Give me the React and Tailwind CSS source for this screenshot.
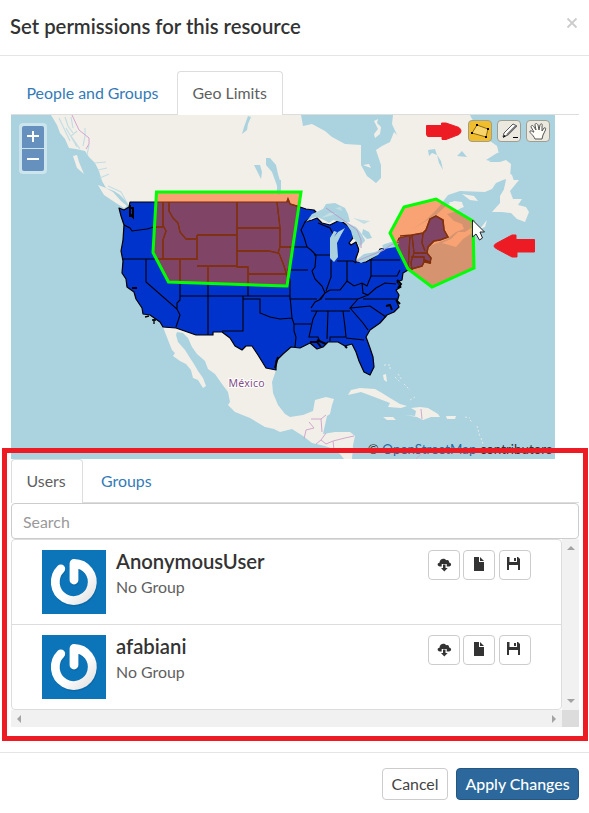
import React from "react";

const LAND = "M51 115L57 125 60 133 65 139 69 148 76 149 85 151 89 157 95 163 99 171 102 181 106 188 114 191 120 195 127 202 130 208 150 225 160 260 180 310 163 327 168 340 172 350 175 353 173 356 180 361 186 364 191 370 193 378 198 380 203 388 206 386 203 378 198 371 194 364 190 358 185 350 178 342 176 335 177 332 183 333 188 338 192 347 197 354 205 361 208 369 215 374 222 384 228 392 230 402 228 405 235 412 250 418 265 427 274 429 280 432 292 429 303 436 312 443 325 446 334 449 340 454 344 459H352L353 445 355 436 350 432 335 432 323 434 325 425 327 416 330 414 332 405 334 399 326 397 315 400 313 411 303 415 290 417 285 414 278 405 273 393 272 382 276 370 250 335 298 285 372 290 385 262 382 250 391 242 399 241 420 250 447 239 456 232 464 229 462 224 454 221 447 214 454 212 463 207 462 202 454 201 447 205 435 216 421 224 411 230 425 221 438 208 448 195 460 191 485 192 492 189 496 183 503 180 510 178 511 164 506 160 500 162 489 162 499 154 497 146 490 141 483 133 476 124 472 119 470 115Z";
const STATES = "M119 208L124 210 129 207 130 202H287L288 199 290 204 300 207 306 209 314 210 316 212 310 218 305 222 312 220 317 218 322 223 330 225 340 220 348 226 353 233 353 238 349 243 351 245 356 242 359 250 356 258 356 262 366 262 377 255 380 249 390 247 397 243 399 238 412 235 423 233 426 230 430 219 436 216 443 220 444 230 448 237 440 240 434 241 428 247 427 253 431 258 430 263 424 262 422 266 408 270 403 273 402 280 397 282 401 287 396 290 399 295 397 302 399 307 394 312 387 315 380 323 370 330 366 337 370 348 373 357 374 367 370 375 364 372 359 361 356 352 352 344 345 346 338 342 328 342 323 347 317 349 310 343 300 348 291 347 283 354 276 361 276 370 266 368 258 355 252 346 246 346 242 350 235 346 230 338 222 332H213V335H196L176 328 163 327 160 322 150 315 143 314 142 308 136 299 134 292 127 287 126 279 122 273 123 261 121 251 123 240 124 225 121 216Z";
const LINES = "M124 225L130 228 132 231 147 229 154 227 164 227 166 231 163 240 163 259M163 202V226M169 202V211L173 218 178 223 180 232 186 239 197 239V260M122 259H197M146 259V282L177 309 180 315 176 327M180 259V300L177 303V309M197 235H237V266H197M197 239V235M237 202V267H248V296M208 267V335M180 296H290M237 228H280L277 202M280 228V247L278 253 269 251H237M280 247H307M279 253L284 266 287 276M248 274H287L290 280V300M287 270H308M243 296V331H222M243 299H260V313L270 317 280 319 292 318M290 296L292 318M291 299H317M292 318L294 324V331L296 337 295 347M294 324H311M311 308L315 302 321 299 325 293 322 286 315 279 312 271 315 267 316 255 311 250 307 247 304 237 301 230 305 222M318 223L330 228 333 234M314 255H331M331 260V277L326 291M337 261H353M347 261V281L340 290 330 290 325 293 319 300M353 261L356 263M371 259V276H397M371 276L367 286 362 283 354 286 347 281M362 283L363 293 368 295 376 288 385 283 396 284M368 295L358 299H325M358 299L350 308 370 306 386 317M363 299H397M311 311H350M350 308L363 323 368 330M328 311L327 339M343 311L345 327 346 337H330V341M346 338L364 340M317 311L313 319 309 337H318L320 342M371 276H397L400 270M374 260H400M408 270L410 235M412 235L414 253 411 262 412 270M423 233L422 243 425 251M414 253H428M411 257H424V263M369 260L374 260";

function GeoMap() {
  return (
    <svg viewBox="11 115 544 344" className="block h-full w-full">
      <defs>
        <clipPath id="drawn"><path d="M156.5 192H301L287 286 168.500 282 153 252.500ZM404 207L436 199 473 221 474 268 432 287 408 269 390 233Z" /></clipPath>
      </defs>
      <rect x="11" y="115" width="544" height="344" fill="#aad3df" />
      <path d={LAND} fill="#f2efe9" />
      <path d="M98 185L106 188 113 192 121 201 127 206 124 208 116 203 104 195ZM73 156L77 155 79 162 84 174 77 168ZM442 243L451 239 458 232 465 232 474 226 479 230 487 220 485 227 475 231 463 239 456 247ZM462 194L474 196 478 201 470 200ZM449 202L461 202 464 207 456 209ZM511 180H519L510 191 513 199 522 199 518 205 526 207 529 212 525 222 517 219 511 213 502 212 492 212 500 203 500 196 506 186ZM507 172L512 175 514 181 509 190 503 193 506 180Z" fill="#f2efe9" />
      <path d="M348 395L351 390 360 388 375 389 382 393 390 398 400 404 407 406 401 408 388 407 390 403 377 398 369 395 361 392ZM383 417L393 417 396 420 387 420ZM405 415L415 416 416 411 411 408 420 407 428 408 438 414 440 417 431 417 423 420 417 417ZM446 416L456 416 455 419 447 419ZM383 375L386 374 387 382 384 380Z" fill="#f2efe9" />
      <path d="M384 365H390L390 370M395 377L400 382M404 384L410 390M410 400L415 397M470 420L472 422M477 426L480 437M398 374L402 380M481 438L483 444M465 417L470 418" fill="none" stroke="#e3eae6" strokeWidth="1" strokeDasharray="2 2" />
      <path d="M301 115L303 126 312 124 325 131 332 137 345 144 361 145 361 165 367 176 376 183 381 178 381 165 376 150 382 146 390 142 394 132 397 135 392 124 393 115Z" fill="#aad3df" />
      <path d="M363 165L369 164 371 168ZM374 121L378 119 377 123 381 127 380 134 375 138 374 134 378 129Z" fill="#f2efe9" />
      <path d="M248 116L251 117 248 124 247 130 242 134 244 127ZM266 158L270 158 276 165 278 174 281 184 279 192 276 183 272 172 266 165ZM254 165L260 165 262 172 261 179 258 173ZM277 180H281V190L279 195 277 191ZM428 150L435 149 437 155 432 153 429 156ZM437 155L441 161 443 170 439 163ZM457 156L462 151 467 157ZM486 160L497 153 503 152 498 157 490 161Z" fill="#aad3df" />
      <path d="M85 128L85 136 83 146M89 145L87 155M65 117L68 126 73 133M59 118L70 141M66 128L77 147M71 117L73 128M77 131L71 136 80 149M94 163L106 162M98 170L107 168M100 178L109 174M108 186L121 192 126 201" fill="none" stroke="#c3dee3" strokeWidth="1.2" />
      <path d="M72 115L79 130 89 138V144L86 149" fill="none" stroke="#d4a4cf" strokeWidth="1" />

      <path d={STATES} fill="#0033cc" stroke="#000" strokeWidth="1.200" strokeLinejoin="round" />
      <path d={LINES} fill="none" stroke="#000" strokeWidth="1.100" />
      <path d="M306 222L312 214 323 209 326 204 335 203 345 208 348 214 350 222 341 222 333 220 329 223 324 220 317 217 312 218ZM330 238L334 231 337 232 334 237 338 232 345 228 341 235 337 243 338 257 334 262 330 258ZM345 222L356 227 361 233 365 240 364 247 360 248 357 242 353 238 351 231ZM363 229L369 232 372 238 367 239 362 234ZM356 260L364 254 375 252 384 248 378 255 370 259 361 263ZM382 245L391 242 399 243 396 247 384 249Z" fill="#aad3df" />
      <path d="M360 246L366 240 371 243 379 241 384 244 375 251 364 253 358 258Z" fill="#f2efe9" />
      <path d="M321 218L329 213 337 213 330 216ZM335 208L341 207 342 211ZM353 218L362 220 370 221 364 224Z" fill="#c4dfe4" />
      <path d="M326 208L346 222 357 230 361 240 361 248M357 261L374 254 384 250 389 246 399 241" fill="none" stroke="#b99cc9" />
      <path d="M130 205V217M131 208H133V217L130 214M132 288L137 288M345 346L347 348M386 306L390 305 392 310M396 300L400 304M397 280L401 284 398 288M310 342L317 342 321 347M278 357L275 368M424 260L431 263M317 340L326 344" fill="none" stroke="#000" strokeWidth="2" />
      <path d="M145 317L149 316M154 319V324M152 320H156" fill="none" stroke="#000" strokeWidth="1.300" />
      <path d="M311 419H321L322 432M309 422L314 428 306 430 304 439M321 419L326 415M326 433L321 440 316 444M321 440L326 444 333 441 334 450M333 441L345 438 354 436M421 409L422 419M416 459L421 454" fill="none" stroke="#d1a8ce" strokeWidth="1" />

      <path d="M156.5 192H301L287 286 168.500 282 153 252.500ZM404 207L436 199 473 221 474 268 432 287 408 269 390 233Z" fill="#ff5500" fillOpacity=".5" />
      <g clipPath="url(#drawn)"><path d={LINES} fill="none" stroke="#80310d" strokeWidth="1.300" /><path d="M287 202L288 199 290 204 303 208M400 236L412 235 423 233 426 230 430 219 436 216 443 220 444 230 448 237 440 240 434 241 428 247 427 253 431 258 430 263 424 262 422 266 408 270" fill="none" stroke="#80310d" strokeWidth="1.500" /></g>
      <path d="M156.5 192H301L287 286 168.500 282 153 252.500ZM404 207L436 199 473 221 474 268 432 287 408 269 390 233Z" fill="none" stroke="#00ff00" strokeWidth="3" />
      <text x="228.500" y="387" fontFamily="Noto Sans, sans-serif" fontSize="10.500" letterSpacing=".25" fill="#824f86" stroke="#fff" strokeWidth="2" paintOrder="stroke">México</text>
      <path d="M426.500 125.500H441.500V123H446L459 127.500Q463 131 459 134.500L446 139.500H442V136.500H428Q426.500 136 426.500 134Z M534.500 239.500V252H517V257H512L497 249Q491 246 497 243L512 235H516V239.500Z" fill="#ed1c24" stroke="#ed1c24" strokeWidth="1" strokeLinejoin="round" />
      <path d="M472.500 220V237L476 234 479.500 240 482.500 238 480 232H484.500Z" fill="#fff" stroke="#222" strokeWidth="1" />
    </svg>
  );
}

function MapTool({ active, children }) {
  return (
    <button className={"flex h-[22px] w-6 items-center justify-center rounded-[4px] border border-[#a09d91] " + (active ? "bg-[#f0bd2c]" : "bg-[#ebe8df]")}>
      {children}
    </button>
  );
}

function Avatar() {
  return (
    <svg viewBox="0 0 64 64" className="h-16 w-16 shrink-0">
      <defs>
        <linearGradient id="ring" x1="0" y1="0" x2="1" y2="1">
          <stop offset=".55" stopColor="#fff" /><stop offset="1" stopColor="#e2e2e2" />
        </linearGradient>
      </defs>
      <rect width="64" height="64" fill="#0c75b9" />
      <path d="M19 18.800A18.500 18.500 0 1 0 32 13.700V30" transform="translate(.6 1.200)" fill="none" stroke="#07578f" strokeOpacity=".35" strokeWidth="9" strokeLinecap="round" strokeLinejoin="round" />
      <path d="M18.800 18.800A18.500 18.500 0 1 0 32 13.500V30" fill="none" stroke="url(#ring)" strokeWidth="8.800" strokeLinecap="round" strokeLinejoin="round" />
    </svg>
  );
}

const GLYPHS = [
  <>
    <path d="M3 9.500C-.3 9 .2 5.700 2.500 5.800 2.600 2 7 .5 9.200 3.300 11.500 2.500 12.200 4.200 12.100 5.500 15 6 14.600 9.500 12 9.500H9.700V7H4.700V9.500Z" />
    <path d="M6 7.500H8.500V11H10.700L7.300 14.500 4 11H6Z" />
  </>,
  <path d="M2 0H7V5H12V14H2ZM8 0L12 4H8Z" />,
  <path d="M1 0H3.500V5H11V0H12L14 2V13H12V8H3V13H1ZM8 1H10V4H8Z" />,
];

function UserRow({ name, last }) {
  return (
    <div className={"flex h-[85px] pl-[30px] pr-[30px] pt-2.5 " + (last ? "" : "border-b border-[#ddd]")}>
      <Avatar />
      <div className="ml-2.5 flex-1">
        <h4 className="-mt-px text-[20.300px] leading-6 font-semibold text-[#333]">{name}</h4>
        <p className="mt-[3px] text-[15.900px] leading-[22px] text-[#606060]">No Group</p>
      </div>
      <div className="flex">
        {GLYPHS.map((glyph, i) => (
          <button key={i} className="mr-1 flex h-[30px] w-8 justify-center rounded-[4px] border border-[#ccc] bg-white pt-1.5 first:mr-[3px] last:mr-0">
            <svg viewBox="0 0 15 15" className={"h-[15px] w-[15px] fill-[#333] " + (i === 2 ? "-ml-[3px]" : i === 1 ? "" : "ml-px")}>{glyph}</svg>
          </button>
        ))}
      </div>
    </div>
  );
}

export default function App() {
  return (
    <div className="relative h-[813px] w-[589px] overflow-hidden bg-white font-['Lato',sans-serif] text-[15.900px] leading-[22px] text-[#606060]">
      <header className="flex h-14 justify-between border-b border-[#e5e5e5] pl-2.5 pr-[11px] pt-[15px]">
        <h3 className="-mt-px text-[20.300px] leading-6 font-semibold text-[#333]">Set permissions for this resource</h3>
        <button className="-mt-1 h-6">
          <svg viewBox="0 0 12 12" className="h-3 w-3"><path d="M1.500 1.500L10.500 10.500M10.500 1.500L1.500 10.500" stroke="#ccc" strokeWidth="1.800" /></svg>
        </button>
      </header>

      <main className="ml-[11px] w-[568px] pt-[15px]">
        <nav className="flex h-11 border-b border-[#ddd]">
          <a className="w-[166px] pl-[15.500px] pt-[11px] text-[#337ab7]">People and Groups</a>
          <a className="h-11 w-[106px] rounded-t-[4px] border border-b-0 border-[#ddd] bg-white pl-[14.500px] pt-2.5">Geo Limits</a>
        </nav>
        <div className="relative h-[344px] w-[544px] overflow-hidden">
          <GeoMap />
          <div className="absolute left-2 top-2 flex h-[51px] w-7 flex-col gap-px rounded-[4px] bg-[#cce4ec] p-[3px]">
            <button className="flex flex-1 items-center justify-center rounded-t-[2px] bg-[#6690bd]"><svg viewBox="0 0 12 12" className="h-3 w-3"><path d="M0 5H12M6 0V11" stroke="#fff" strokeWidth="2" /></svg></button>
            <button className="flex flex-1 items-center justify-center rounded-b-[2px] bg-[#6690bd]"><svg viewBox="0 0 12 12" className="h-3 w-3"><path d="M0 5H12" stroke="#fff" strokeWidth="2" /></svg></button>
          </div>
          <div className="absolute right-[5px] top-[5px] flex gap-[5px]">
            <MapTool active>
              <svg viewBox="0 0 20 18" className="h-[18px] w-5"><path d="M7 3L18 7 16 15 2 11Z" fill="#f7d56b" stroke="#8a6818" /><path d="M6 2H8V4H6ZM17 6H19V8H17ZM15 14H17V16H15ZM1 10H3V12H1Z" /></svg>
            </MapTool>
            <MapTool>
              <svg viewBox="0 0 20 18" className="h-[18px] w-5"><path d="M4 15L5 11 14 2 18 4 9 13Z" fill="#fff" stroke="#555" /><path d="M8 13L17 4" stroke="#777" strokeWidth="2" /><path d="M4 16L5 13 7 14ZM14 15H19V16H14Z" /></svg>
            </MapTool>
            <MapTool>
              <svg viewBox="0 0 20 18" className="h-[18px] w-5"><path d="M7 17C5 12 1 11 2 9 4 8 5 11 6 10L3 5C3 3 5 3 6 5L8 8 7 3C7 1 9 1 10 3L11 8 12 3C13 1 15 2 14 4L14 9 16 6C18 5 18 7 17 9L15 13 14 17Z" fill="#fffef8" stroke="#555" /></svg>
            </MapTool>
          </div>
          <p className="absolute right-[3px] top-[323px] whitespace-nowrap text-[13.400px] leading-[22px] text-[#333]">© <a className="text-[#2c689c]">OpenStreetMap</a> contributors</p>
        </div>

        <nav className="flex h-11 border-b border-[#ddd]">
          <a className="h-11 w-[72px] rounded-t-[4px] border border-b-0 border-[#ddd] bg-white pl-[14.500px] pt-2.5">Users</a>
          <a className="pl-[18px] pt-[11px] text-[#337ab7]">Groups</a>
        </nav>
        <input placeholder="Search" className="block h-9 w-full rounded-[4px] border border-[#ccc] px-[11px] text-[15.900px] outline-none placeholder:text-[#999]" />
        <section className="grid h-[188px] grid-cols-[551px_17px] grid-rows-[171px_17px]">
          <div className="rounded-[4px] border border-[#ddd]">
            <UserRow name="AnonymousUser" />
            <UserRow name="afabiani" last />
          </div>
          <div className="flex flex-col items-center justify-between bg-[#f1f1f1] py-[7px]">
            <svg viewBox="0 0 8 4" className="h-1 w-2"><path d="M0 4L4 0 8 4Z" fill="#a3a3a3" /></svg>
            <svg viewBox="0 0 8 4" className="h-1 w-2"><path d="M0 0H8L4 4Z" fill="#a3a3a3" /></svg>
          </div>
          <div className="flex items-center justify-between bg-[#f1f1f1] px-1.5">
            <svg viewBox="0 0 4 8" className="h-2 w-1"><path d="M4 0V8L0 4Z" fill="#a3a3a3" /></svg>
            <svg viewBox="0 0 4 8" className="h-2 w-1"><path d="M0 0L4 4 0 8Z" fill="#a3a3a3" /></svg>
          </div>
          <div className="bg-[#dcdcdc]" />
        </section>
      </main>

      <footer className="mt-[25px] flex justify-end gap-2 border-t border-[#e5e5e5] pr-2.5 pt-[15px]">
        <button className="h-8 w-[66px] rounded-[4px] border border-[#ccc] bg-white text-[#444]">Cancel</button>
        <button className="h-8 w-[123px] whitespace-nowrap rounded-[4px] border border-[#245682] bg-[#2c689c] text-[15.900px] font-medium text-white">Apply Changes</button>
      </footer>
      <div className="pointer-events-none absolute left-0.5 top-[448px] h-[293px] w-[586px] border-[5px] border-[#ed1c24]" />
    </div>
  );
}
